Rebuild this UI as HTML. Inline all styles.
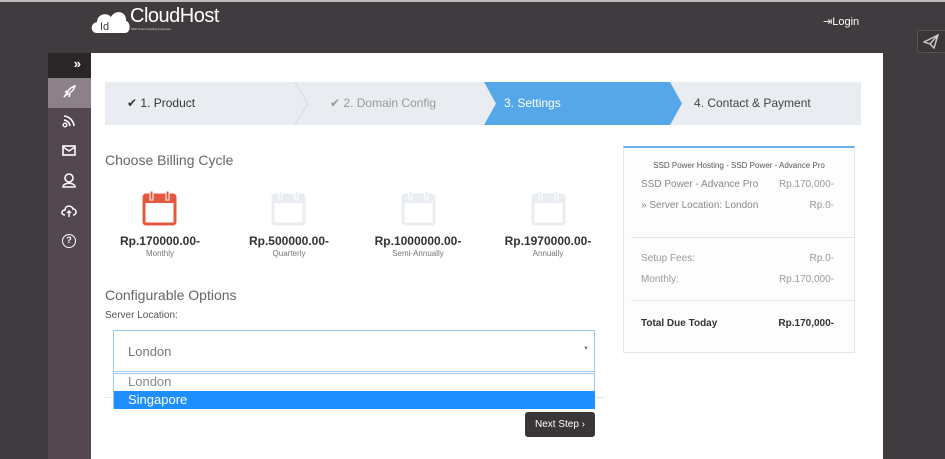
<!DOCTYPE html>
<html><head><style>
*{margin:0;padding:0;box-sizing:border-box}
body{width:945px;height:459px;overflow:hidden;background:#403b3f;font-family:"Liberation Sans",sans-serif;position:relative}
.a{position:absolute}
</style></head><body>
<div class="a" style="left:0;top:0;width:945px;height:2px;background:#bbb"></div>
<!-- logo -->
<svg class="a" style="left:90px;top:7px" width="40" height="27" viewBox="0 0 40 27"><path d="M7 26 C0 26 0 16 7 15 C7 7 17 5 21 10 C25 2 37 4 36 14 C41 15 41 26 35 26 Z" fill="#fff"/><text x="10" y="23" font-size="11" font-family="Liberation Sans" fill="#403b3f">Id</text></svg>
<div class="a" style="left:130px;top:5px;color:#fff;font-size:20px;letter-spacing:-0.5px">CloudHost</div>
<div class="a" style="left:131px;top:27px;color:#ddd;font-size:3px">SSD Cloud Hosting Indonesia</div>
<div class="a" style="left:823px;top:15px;color:#fff;font-size:11px">⇥Login</div>
<div class="a" style="left:917px;top:30px;width:30px;height:23px;background:#3a3638;border:1px solid #555;border-radius:3px"></div>
<svg class="a" style="left:923px;top:34px" width="16" height="15" viewBox="0 0 16 15"><path d="M1 8 L15 1 L11 14 L7 10 Z M7 10 L15 1" fill="none" stroke="#ccc" stroke-width="1.4"/></svg>
<!-- sidebar -->
<div class="a" style="left:48px;top:53px;width:43px;height:406px;background:#534750"></div>
<div class="a" style="left:48px;top:53px;width:43px;height:25px;background:#2a2628;color:#fff;font-size:13px;font-weight:bold;text-align:right;padding:3px 10px 0 0">»</div>
<div class="a" style="left:48px;top:78px;width:43px;height:30px;background:#8c8189"></div>
<svg class="a" style="left:62px;top:85px" width="14" height="14"><path d="M2 12 L5 8 M4 10 C6 5 9 2 13 1 C12 5 9 8 4 10 Z M3 7 L6 6 M8 9 L7 12" fill="none" stroke="#fff" stroke-width="1.5"/></svg>
<svg class="a" style="left:62px;top:114px" width="14" height="14"><circle cx="3" cy="11" r="1.8" fill="none" stroke="#fff" stroke-width="1.4"/><path d="M2 6 A7 7 0 0 1 8 12 M2 2 A11 11 0 0 1 12 12" fill="none" stroke="#fff" stroke-width="1.6"/></svg>
<svg class="a" style="left:62px;top:145px" width="14" height="12"><rect x="1" y="1" width="12" height="9" fill="none" stroke="#fff" stroke-width="1.6"/><path d="M1 2 L7 6 L13 2" fill="none" stroke="#fff" stroke-width="1.4"/></svg>
<svg class="a" style="left:62px;top:173px" width="14" height="15"><circle cx="7" cy="5" r="4" fill="none" stroke="#fff" stroke-width="1.6"/><path d="M1 14 C1 9 13 9 13 14 Z" fill="none" stroke="#fff" stroke-width="1.6"/></svg>
<svg class="a" style="left:61px;top:204px" width="16" height="14"><path d="M4 11 C0 11 0 6 4 6 C4 1 11 1 12 5 C16 5 16 11 12 11" fill="none" stroke="#fff" stroke-width="1.6"/><path d="M8 7 L8 13 M6 9 L8 7 L10 9" fill="none" stroke="#fff" stroke-width="1.4"/></svg>
<div class="a" style="left:62px;top:234px;width:14px;height:14px;border:1.5px solid #fff;border-radius:50%;color:#fff;font-size:9px;text-align:center;line-height:11px;font-weight:bold">?</div>
<!-- panel -->
<div class="a" style="left:91px;top:53px;width:792px;height:406px;background:#fff"></div>
<!-- steps -->
<div class="a" style="left:105px;top:82px;width:756px;height:43px;background:#e9edf1"></div>
<svg class="a" style="left:105px;top:82px" width="756" height="43"><polyline points="190,0 203,21.5 190,43" fill="none" stroke="#d5dadf"/><polygon points="379,0 565,0 577,21.5 565,43 379,43 391,21.5" fill="#55a7e8"/></svg>
<div class="a" style="left:127px;top:96px;color:#333;font-size:12px">✔ 1. Product</div>
<div class="a" style="left:330px;top:96px;color:#999;font-size:12px">✔ 2. Domain Config</div>
<div class="a" style="left:504px;top:96px;color:#fff;font-size:12px">3. Settings</div>
<div class="a" style="left:694px;top:96px;color:#444;font-size:12px">4. Contact &amp; Payment</div>
<!-- billing -->
<div class="a" style="left:105px;top:152px;color:#666;font-size:14px">Choose Billing Cycle</div>
<svg class="a" style="left:142px;top:189px" width="36" height="38"><rect x="2" y="6" width="31" height="29" rx="2" fill="none" stroke="#e5573f" stroke-width="3"/><rect x="2" y="6" width="31" height="8" fill="#e5573f"/><rect x="8" y="2" width="3" height="9" fill="#e5573f" stroke="#fff" stroke-width="1"/><rect x="24" y="2" width="3" height="9" fill="#e5573f" stroke="#fff" stroke-width="1"/></svg>
<svg class="a" style="left:271px;top:189px" width="36" height="38"><rect x="2" y="6" width="31" height="29" rx="2" fill="none" stroke="#e9edf1" stroke-width="3"/><rect x="2" y="6" width="31" height="8" fill="#e9edf1"/><rect x="8" y="2" width="3" height="9" fill="#e9edf1" stroke="#fff" stroke-width="1"/><rect x="24" y="2" width="3" height="9" fill="#e9edf1" stroke="#fff" stroke-width="1"/></svg>
<svg class="a" style="left:401px;top:189px" width="36" height="38"><rect x="2" y="6" width="31" height="29" rx="2" fill="none" stroke="#e9edf1" stroke-width="3"/><rect x="2" y="6" width="31" height="8" fill="#e9edf1"/><rect x="8" y="2" width="3" height="9" fill="#e9edf1" stroke="#fff" stroke-width="1"/><rect x="24" y="2" width="3" height="9" fill="#e9edf1" stroke="#fff" stroke-width="1"/></svg>
<svg class="a" style="left:531px;top:189px" width="36" height="38"><rect x="2" y="6" width="31" height="29" rx="2" fill="none" stroke="#e9edf1" stroke-width="3"/><rect x="2" y="6" width="31" height="8" fill="#e9edf1"/><rect x="8" y="2" width="3" height="9" fill="#e9edf1" stroke="#fff" stroke-width="1"/><rect x="24" y="2" width="3" height="9" fill="#e9edf1" stroke="#fff" stroke-width="1"/></svg>
<div class="a" style="left:100px;top:234px;width:120px;text-align:center;font-size:12px;font-weight:bold;color:#333">Rp.170000.00-<div style="font-size:8px;font-weight:normal;color:#777;margin-top:1px">Monthly</div></div>
<div class="a" style="left:229px;top:234px;width:120px;text-align:center;font-size:12px;font-weight:bold;color:#333">Rp.500000.00-<div style="font-size:8px;font-weight:normal;color:#777;margin-top:1px">Quarterly</div></div>
<div class="a" style="left:358px;top:234px;width:120px;text-align:center;font-size:12px;font-weight:bold;color:#333">Rp.1000000.00-<div style="font-size:8px;font-weight:normal;color:#777;margin-top:1px">Semi-Annually</div></div>
<div class="a" style="left:488px;top:234px;width:120px;text-align:center;font-size:12px;font-weight:bold;color:#333">Rp.1970000.00-<div style="font-size:8px;font-weight:normal;color:#777;margin-top:1px">Annually</div></div>
<!-- options -->
<div class="a" style="left:105px;top:287px;color:#666;font-size:14px">Configurable Options</div>
<div class="a" style="left:105px;top:310px;color:#555;font-size:10px">Server Location:</div>
<div class="a" style="left:105px;top:397px;width:500px;height:1px;background:#e5e5e5"></div>
<div class="a" style="left:113px;top:330px;width:482px;height:42px;border:1px solid #9cc8ee;padding:13px 0 0 14px;color:#777;font-size:13px">London<span style="position:absolute;right:5px;top:15px;font-size:6px;color:#777">▼</span></div>
<div class="a" style="left:113px;top:373px;width:482px;height:36px;border:1px solid #9cc8ee;background:#fff"></div>
<div class="a" style="left:128px;top:374px;color:#888;font-size:13px">London</div>
<div class="a" style="left:114px;top:391px;width:481px;height:18px;background:#1f8fff;color:#fff;font-size:13px;padding:1px 0 0 14px">Singapore</div>
<div class="a" style="left:525px;top:412px;width:70px;height:25px;background:#3a3537;border-radius:3px;color:#fff;font-size:10px;text-align:center;line-height:25px">Next Step ›</div>
<!-- cart -->
<div class="a" style="left:623px;top:146px;width:232px;height:207px;border:1px solid #e6e6e6;border-top:2px solid #6ab3ef;background:#fdfdfd"></div>
<div class="a" style="left:623px;top:161px;width:232px;text-align:center;font-size:8px;color:#555">SSD Power Hosting - SSD Power - Advance Pro</div>
<div class="a" style="left:641px;top:179px;font-size:10px;color:#888">SSD Power - Advance Pro</div>
<div class="a" style="left:741px;top:179px;width:93px;text-align:right;font-size:10px;color:#999">Rp.170,000-</div>
<div class="a" style="left:641px;top:200px;font-size:10px;color:#888">» Server Location: London</div>
<div class="a" style="left:741px;top:200px;width:93px;text-align:right;font-size:10px;color:#999">Rp.0-</div>
<div class="a" style="left:631px;top:237px;width:223px;height:1px;background:#e5e5e5"></div>
<div class="a" style="left:641px;top:253px;font-size:10px;color:#999">Setup Fees:</div>
<div class="a" style="left:741px;top:253px;width:93px;text-align:right;font-size:10px;color:#999">Rp.0-</div>
<div class="a" style="left:641px;top:274px;font-size:10px;color:#999">Monthly:</div>
<div class="a" style="left:741px;top:274px;width:93px;text-align:right;font-size:10px;color:#999">Rp.170,000-</div>
<div class="a" style="left:631px;top:300px;width:223px;height:1px;background:#e5e5e5"></div>
<div class="a" style="left:641px;top:318px;font-size:10px;color:#333;font-weight:bold">Total Due Today</div>
<div class="a" style="left:741px;top:318px;width:93px;text-align:right;font-size:10px;color:#333;font-weight:bold">Rp.170,000-</div>
</body></html>
